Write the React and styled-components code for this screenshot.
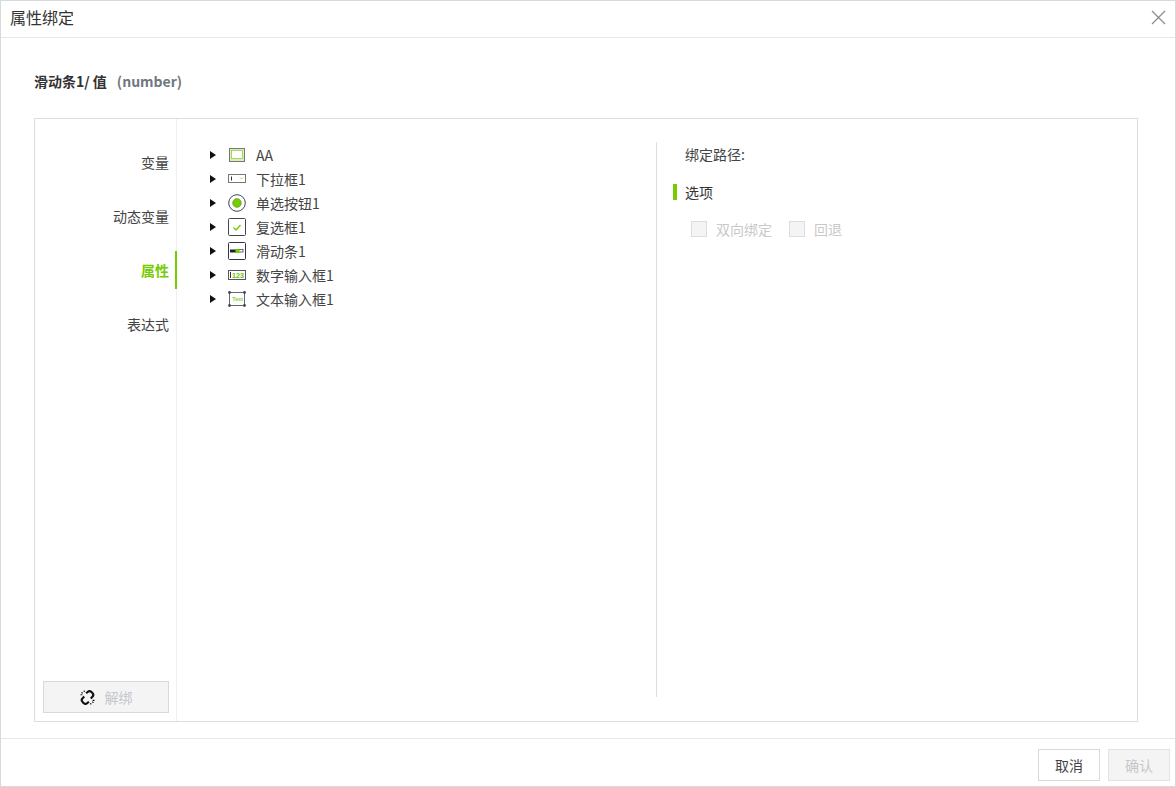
import React from "react";
import styled, { createGlobalStyle } from "styled-components";

const GREEN = "#76cc00";

const Global = createGlobalStyle`
  html, body { margin: 0; padding: 0; background: #fff; }
  body { font-family: "Noto Sans CJK SC", "Noto Sans", sans-serif; font-size: 14px; color: #333; }
`;

const AaIcon = () => (
  <svg width="18" height="16" viewBox="0 0 18 16">
    <rect x="1.500" y="1.500" width="15" height="13" fill="#d8efb5" stroke="#777" />
    <rect x="3.500" y="3.500" width="11" height="8" fill="#fff" stroke="#a5d860" />
  </svg>
);

const SelectIcon = () => (
  <svg width="18" height="10" viewBox="0 0 18 10">
    <rect x="0.5" y="0.5" width="17" height="8" fill="#fff" stroke="#777" />
    <path d="M3.500 2.500v4" stroke="#333" />
    <path d="M12 3.500l1.500 1.500L15 3.500" fill="none" stroke="#a5d860" />
  </svg>
);

const RadioIcon = () => (
  <svg width="18" height="18" viewBox="0 0 18 18">
    <circle cx="9" cy="9" r="8.300" fill="#fff" stroke="#445" />
    <circle cx="9" cy="9" r="4.400" fill={GREEN} stroke="#5a7a33" strokeWidth="0.5" />
  </svg>
);

const CheckIcon = () => (
  <svg width="18" height="18" viewBox="0 0 18 18">
    <rect x="0.5" y="0.5" width="17" height="17" rx="1" fill="#fff" stroke="#445" />
    <path d="M5.500 9.500l2.500 2.500 4.500-5" fill="none" stroke={GREEN} strokeWidth="1.400" />
  </svg>
);

const SliderIcon = () => (
  <svg width="18" height="18" viewBox="0 0 18 18">
    <rect x="0.5" y="0.5" width="17" height="17" rx="1" fill="#fff" stroke="#334" />
    <rect x="2" y="7.500" width="8" height="3" fill="#222" />
    <rect x="10.500" y="7.500" width="4.500" height="2.500" fill="#fff" stroke="#444" strokeWidth="0.8" />
    <circle cx="9.500" cy="9" r="2.200" fill={GREEN} />
  </svg>
);

const NumberIcon = () => (
  <svg width="18" height="10" viewBox="0 0 18 10">
    <rect x="0.5" y="0.5" width="17" height="9" fill="#fff" stroke="#556" />
    <path d="M2.500 2v6" stroke="#333" />
    <IconText x="4" y="7.700" $size={7.200} $weight={700} $color="#6cc000">123</IconText>
  </svg>
);

const TextIcon = () => (
  <svg width="18" height="18" viewBox="0 0 18 18">
    <rect x="1.500" y="2.500" width="15" height="13" fill="#fff" stroke="#667" />
    <IconText x="4.300" y="11" $size={5.500} $weight={700} $color="#92cc4a">Text</IconText>
    <g fill="#445">
      <circle cx="1.500" cy="2.500" r="1.400" />
      <circle cx="16.500" cy="2.500" r="1.400" />
      <circle cx="1.500" cy="15.500" r="1.400" />
      <circle cx="16.500" cy="15.500" r="1.400" />
    </g>
  </svg>
);

const UnlinkIcon = () => (
  <svg width="15" height="15" viewBox="0 0 16 16" fill="none" stroke="#111" strokeWidth="2.300">
    <path d="M6.500 3.500l1.600-1.300a3 3 0 0 1 4.200 0l.9.9a3 3 0 0 1 0 4.200L11.500 9" />
    <path d="M9.500 12.500l-1.600 1.300a3 3 0 0 1-4.200 0l-.9-.9a3 3 0 0 1 0-4.200L4.500 7" />
    <path d="M1.500 2.500l1.500 1M.5 5h2M4.500.5v1.700M14.500 13.500l-1.500-1M15.500 11h-2M11.500 15.500v-1.700" strokeWidth="1.200" />
  </svg>
);

const treeItems = [
  { label: "AA", Icon: AaIcon },
  { label: "下拉框1", Icon: SelectIcon },
  { label: "单选按钮1", Icon: RadioIcon },
  { label: "复选框1", Icon: CheckIcon },
  { label: "滑动条1", Icon: SliderIcon },
  { label: "数字输入框1", Icon: NumberIcon },
  { label: "文本输入框1", Icon: TextIcon },
];

const tabs = ["变量", "动态变量", "属性", "表达式"];

export default function App() {
  return (
    <>
      <Global />
      <Dialog>
        <Header>
          <Title>属性绑定</Title>
          <CloseButton aria-label="关闭">
            <svg width="15" height="15" viewBox="0 0 15 15">
              <path d="M1 1l13 13M14 1L1 14" stroke="#8c8c8c" strokeWidth="1.200" />
            </svg>
          </CloseButton>
        </Header>
        <Body>
          <SubTitle>
            滑动条1/ 值<TypeHint>(number)</TypeHint>
          </SubTitle>
          <Panel>
            <Sidebar>
              <TabList>
                {tabs.map((t) => (
                  <Tab key={t} $active={t === "属性"}>
                    {t}
                  </Tab>
                ))}
              </TabList>
              <UnbindButton>
                <UnlinkIcon />
                <span>解绑</span>
              </UnbindButton>
            </Sidebar>
            <TreeColumn>
              {treeItems.map(({ label, Icon }) => (
                <TreeRow key={label}>
                  <Caret />
                  <IconSlot>
                    <Icon />
                  </IconSlot>
                  <TreeLabel>{label}</TreeLabel>
                </TreeRow>
              ))}
            </TreeColumn>
            <PathColumn>
              <PathTitle>绑定路径:</PathTitle>
              <PathItem>选项</PathItem>
              <Options>
                <Option>
                  <Box />
                  双向绑定
                </Option>
                <Option>
                  <Box />
                  回退
                </Option>
              </Options>
            </PathColumn>
          </Panel>
        </Body>
        <Footer>
          <FooterButton>取消</FooterButton>
          <FooterButton $disabled>确认</FooterButton>
        </Footer>
      </Dialog>
    </>
  );
}

const IconText = styled.text`
  font-family: "Liberation Sans", sans-serif;
  font-size: ${(p) => p.$size}px;
  font-weight: ${(p) => p.$weight};
  fill: ${(p) => p.$color};
`;

const Dialog = styled.div`
  width: 1176px;
  height: 787px;
  box-sizing: border-box;
  border: 1px solid #d9d9d9;
  display: flex;
  flex-direction: column;
  background: #fff;
  overflow: hidden;
`;

const Header = styled.div`
  height: 37px;
  box-sizing: border-box;
  border-bottom: 1px solid #e8e8e8;
  display: flex;
  align-items: center;
  justify-content: space-between;
  padding: 0 9px 3px;
  flex: none;
`;

const Title = styled.div`
  font-size: 16px;
  line-height: 24px;
  margin-bottom: 2px;
  color: #333;
`;

const CloseButton = styled.div`
  width: 15px;
  height: 15px;
  display: flex;
`;

const Body = styled.div`
  flex: 1;
  min-height: 0;
  display: flex;
  flex-direction: column;
  padding: 0 37px 16px 33px;
`;

const SubTitle = styled.div`
  height: 80px;
  box-sizing: border-box;
  padding-top: 32px;
  font-size: 14px;
  line-height: 22px;
  font-weight: 700;
  color: #333;
  flex: none;
`;

const TypeHint = styled.span`
  margin-left: 10px;
  color: #6f7780;
`;

const Panel = styled.div`
  flex: 1;
  min-height: 0;
  border: 1px solid #dcdcdc;
  display: flex;
`;

const Sidebar = styled.div`
  width: 142px;
  box-sizing: border-box;
  border-right: 1px solid #efefef;
  display: flex;
  flex-direction: column;
  justify-content: space-between;
  padding: 24px 0 8px 8px;
  flex: none;
`;

const TabList = styled.div`
  display: flex;
  flex-direction: column;
  gap: 16px;
`;

const Tab = styled.div`
  height: 38px;
  line-height: 38px;
  text-align: right;
  padding-right: 6px;
  font-size: 14px;
  font-weight: ${(p) => (p.$active ? 700 : 400)};
  color: ${(p) => (p.$active ? GREEN : "#444")};
  border-right: 2px solid ${(p) => (p.$active ? GREEN : "transparent")};
  margin-right: -1px;
`;

const UnbindButton = styled.div`
  width: 126px;
  height: 32px;
  box-sizing: border-box;
  border: 1px solid #d9d9d9;
  background: #f4f4f4;
  color: #c4c8cc;
  font-size: 14px;
  display: flex;
  align-items: center;
  justify-content: center;
  gap: 10px;
`;

const TreeColumn = styled.div`
  width: 480px;
  box-sizing: border-box;
  margin: 23px 0 24px;
  padding: 1px 0 0 33px;
  border-right: 1px solid #dedede;
  flex: none;
`;

const TreeRow = styled.div`
  height: 24px;
  display: flex;
  align-items: center;
`;

const Caret = styled.span`
  width: 0;
  height: 0;
  border-left: 6px solid #111;
  border-top: 4.5px solid transparent;
  border-bottom: 4.5px solid transparent;
`;

const IconSlot = styled.span`
  width: 18px;
  height: 18px;
  margin-left: 12px;
  display: flex;
  align-items: center;
  justify-content: center;
`;

const TreeLabel = styled.span`
  margin-left: 10px;
  font-size: 14px;
  line-height: 24px;
  color: #444;
`;

const PathColumn = styled.div`
  flex: 1;
  padding: 23px 0 0 16px;
`;

const PathTitle = styled.div`
  height: 24px;
  line-height: 24px;
  padding-left: 12px;
  font-size: 14px;
  color: #444;
`;

const PathItem = styled.div`
  margin-top: 18px;
  height: 16px;
  line-height: 16px;
  padding-left: 8px;
  border-left: 4px solid ${GREEN};
  font-size: 14px;
  color: #333;
`;

const Options = styled.div`
  display: flex;
  gap: 17px;
  margin-top: 19px;
  padding-left: 18px;
`;

const Option = styled.div`
  display: flex;
  align-items: center;
  gap: 9px;
  font-size: 14px;
  color: #c9c9c9;
`;

const Box = styled.span`
  width: 16px;
  height: 16px;
  box-sizing: border-box;
  border: 1px solid #ddd;
  background: #f4f4f4;
`;

const Footer = styled.div`
  height: 48px;
  box-sizing: border-box;
  border-top: 1px solid #e8e8e8;
  display: flex;
  justify-content: flex-end;
  align-items: flex-start;
  gap: 8px;
  padding: 10px 5px 0 0;
  flex: none;
`;

const FooterButton = styled.div`
  width: 62px;
  height: 32px;
  line-height: 30px;
  box-sizing: border-box;
  text-align: center;
  font-size: 14px;
  border: 1px solid ${(p) => (p.$disabled ? "#e3e3e3" : "#d9d9d9")};
  background: ${(p) => (p.$disabled ? "#f4f4f4" : "#fff")};
  color: ${(p) => (p.$disabled ? "#c4c8cc" : "#444")};
`;
